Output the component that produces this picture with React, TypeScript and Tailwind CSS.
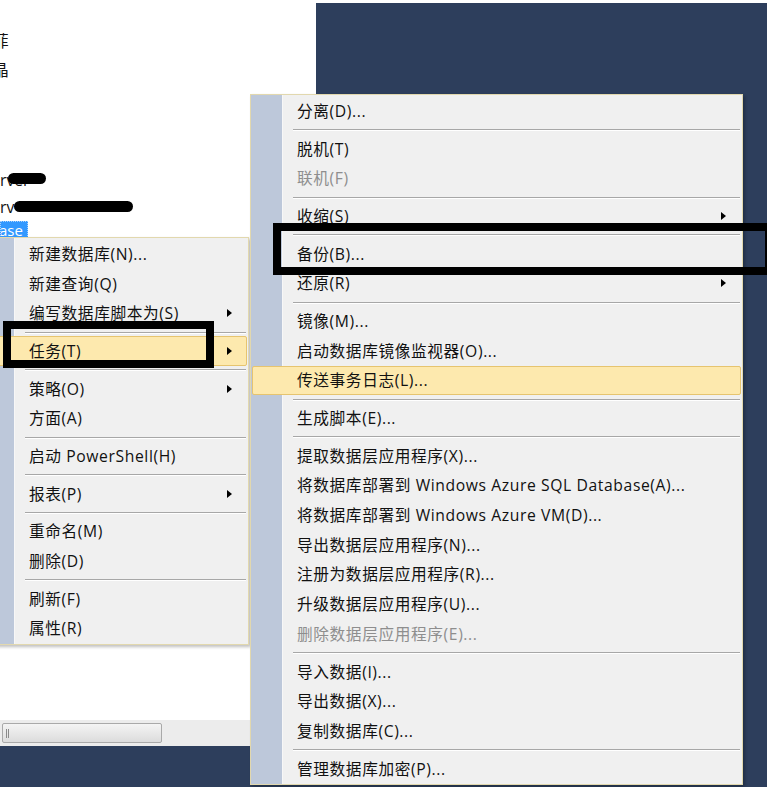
type Entry = { label: string; arrow?: boolean; disabled?: boolean; active?: boolean } | null

const leftItems: Entry[] = [
  { label: '新建数据库(N)...' },
  { label: '新建查询(Q)' },
  { label: '编写数据库脚本为(S)', arrow: true },
  null,
  { label: '任务(T)', arrow: true, active: true },
  null,
  { label: '策略(O)', arrow: true },
  { label: '方面(A)' },
  null,
  { label: '启动 PowerShell(H)' },
  null,
  { label: '报表(P)', arrow: true },
  null,
  { label: '重命名(M)' },
  { label: '删除(D)' },
  null,
  { label: '刷新(F)' },
  { label: '属性(R)' },
]

const taskItems: Entry[] = [
  { label: '分离(D)...' },
  null,
  { label: '脱机(T)' },
  { label: '联机(F)', disabled: true },
  null,
  { label: '收缩(S)', arrow: true },
  null,
  { label: '备份(B)...' },
  { label: '还原(R)', arrow: true },
  null,
  { label: '镜像(M)...' },
  { label: '启动数据库镜像监视器(O)...' },
  { label: '传送事务日志(L)...', active: true },
  null,
  { label: '生成脚本(E)...' },
  null,
  { label: '提取数据层应用程序(X)...' },
  { label: '将数据库部署到 Windows Azure SQL Database(A)...' },
  { label: '将数据库部署到 Windows Azure VM(D)...' },
  { label: '导出数据层应用程序(N)...' },
  { label: '注册为数据层应用程序(R)...' },
  { label: '升级数据层应用程序(U)...' },
  { label: '删除数据层应用程序(E)...', disabled: true },
  null,
  { label: '导入数据(I)...' },
  { label: '导出数据(X)...' },
  { label: '复制数据库(C)...' },
  null,
  { label: '管理数据库加密(P)...' },
]

function Menu({ items, className }: { items: Entry[]; className: string }) {
  return (
    <div
      className={`absolute border border-[#e2d8ae] bg-[linear-gradient(to_right,#bdc8da_31px,#f7f7f7_31px,#f7f7f7_32px,#f0f0f0_32px)] py-[1px] shadow-[2px_2px_3px_rgba(0,0,0,0.25)] ${className}`}
    >
      {items.map((it, i) =>
        it ? (
          <div
            key={i}
            className={`mx-[1px] flex h-[29.7px] items-center rounded-[2px] border pl-[44px] pr-[14px] ${
              it.active ? 'border-[#e6c46f] bg-[#fde9ae]' : 'border-transparent'
            } ${it.disabled ? 'text-[#8e8e8e]' : 'text-[#111111]'}`}
          >
            <span className="whitespace-nowrap tracking-[0.6px]">{it.label}</span>
            {it.arrow && (
              <span className="ml-auto h-0 w-0 border-y-[4.5px] border-l-[5px] border-y-transparent border-l-black" />
            )}
          </div>
        ) : (
          <div key={i} className="flex h-[8px] items-center pl-[42px] pr-[2px]">
            <div className="h-px w-full bg-[#a7a7a7] shadow-[0_1px_0_#ffffff]" />
          </div>
        )
      )}
    </div>
  )
}

function Clipped({ ch }: { ch: string }) {
  return (
    <div className="h-[20px] w-[9px] overflow-hidden">
      <span className="-ml-[7px] block whitespace-nowrap">{ch}</span>
    </div>
  )
}

export default function App() {
  return (
    <div className="relative flex h-[787px] w-[767px] overflow-hidden bg-white font-['Open_Sans','Noto_Sans_CJK_SC',sans-serif] text-[15.7px] leading-[20px] text-[#111111]">
      {/* object explorer side */}
      <div className="flex w-[316px] flex-col">
        <div className="flex flex-1 flex-col pt-[31px]">
          <Clipped ch="菲" />
          <div className="mt-[9px]">
            <Clipped ch="晶" />
          </div>
          <div className="relative mt-[90px] h-[20px]">
            rver
            <span className="absolute left-[8px] top-[3px] h-[11px] w-[38px] rounded-full bg-black" />
          </div>
          <div className="relative mt-[7px] h-[20px]">
            rv
            <span className="absolute left-[14px] top-[4px] h-[11px] w-[119px] rounded-full bg-black" />
          </div>
          <div className="mt-[4px] h-[19px] w-[28px] overflow-hidden border border-dotted border-[#a9d1ff] bg-[#3399ff] text-[15px] leading-[17px] text-white">
            <span className="-ml-[2px] block">ase</span>
          </div>
        </div>
        <div className="flex h-[26px] items-center bg-[#ececec] pl-[2px]">
          <div className="flex h-[20px] w-[160px] items-center rounded-[2px] border border-[#a9a9a9] bg-[linear-gradient(to_bottom,#f4f4f4,#dcdcdc)] pl-[3px]">
            <div className="h-[9px] w-[3px] border-x border-[#8a8a8a]" />
          </div>
        </div>
        <div className="h-[41px] bg-[#2d3e5c]" />
      </div>
      <div className="mt-[3px] flex-1 bg-[#2d3e5c]" />

      {/* context menus */}
      <Menu items={leftItems} className="left-[-18px] top-[237px] w-[267px]" />
      <Menu items={taskItems} className="left-[250px] top-[94px] w-[493px]" />

      {/* annotation boxes */}
      <div className="absolute left-[3px] top-[321px] h-[47px] w-[211px] border-[8px] border-black" />
      <div className="absolute left-[273px] top-[223px] h-[52px] w-[500px] border-[8px] border-black" />
    </div>
  )
}
